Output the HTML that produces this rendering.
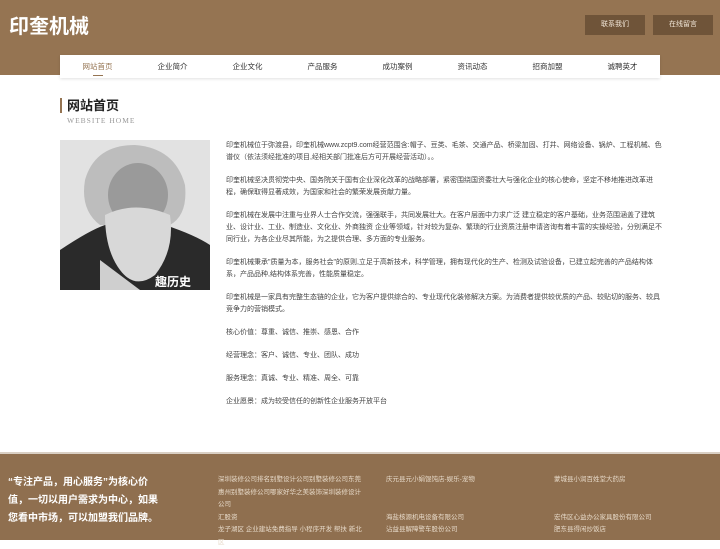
<!DOCTYPE html>
<html><head><meta charset="utf-8"><style>
*{margin:0;padding:0;box-sizing:border-box}
body{width:720px;height:540px;overflow:hidden;background:#fff;font-family:"Liberation Sans","Noto Sans CJK SC",sans-serif;position:relative}
.hd{position:absolute;left:0;top:0;width:720px;height:75px;background:#957452}
.logo{position:absolute;left:9px;top:10px;color:#fff;font-size:20px;font-weight:bold}
.btn{position:absolute;top:15px;width:60px;height:20px;background:#6f5439;color:#f1e6d8;font-size:7px;line-height:20px;text-align:center}
.nav{position:absolute;left:60px;top:55px;width:600px;height:23px;background:#fff;box-shadow:0 1px 3px rgba(0,0,0,.12);display:flex}
.nav div{flex:1;text-align:center;font-size:7.5px;line-height:23px;color:#333;position:relative}
.nav div.a{color:#957452}
.nav div.a:after{content:"";position:absolute;left:33px;width:10px;bottom:2px;height:1px;background:#957452}
.tt{position:absolute;left:60px;top:98px;border-left:2px solid #957452;padding-left:5px;font-size:13px;font-weight:bold;color:#222;line-height:15px}
.en{position:absolute;left:67px;top:116px;font-family:"Liberation Serif",serif;font-size:7.5px;color:#999;letter-spacing:1px}
.img{position:absolute;left:60px;top:140px;width:150px;height:150px;overflow:hidden}
.txt{position:absolute;left:226px;top:140px;width:436px;font-size:7px;line-height:12px;color:#444}
.txt p{margin-bottom:11px}
.ft{position:absolute;left:0;top:452px;width:720px;height:88px;background:#8f6f4f;border-top:2px solid #d9cfc4}
.fq{position:absolute;left:8px;top:20px;width:152px;color:#fff;font-size:10px;font-weight:bold;line-height:18px}
.fl{position:absolute;font-size:6.5px;color:#e6d9c8;line-height:12.5px;width:135px}
</style></head><body>
<div class="hd">
<div class="logo">印奎机械</div>
<div class="btn" style="left:585px">联系我们</div>
<div class="btn" style="left:653px">在线留言</div>
</div>
<div class="nav"><div class="a">网站首页</div><div>企业简介</div><div>企业文化</div><div>产品服务</div><div>成功案例</div><div>资讯动态</div><div>招商加盟</div><div>诚聘英才</div></div>
<div class="tt">网站首页</div>
<div class="en">WEBSITE HOME</div>
<div class="img">
<svg width="150" height="150" viewBox="0 0 150 150">
<rect width="150" height="150" fill="#e2e2e2"/>
<path d="M0 110 Q30 90 45 85 L105 85 Q135 95 150 105 L150 150 L0 150Z" fill="#2a2a2a"/>
<path d="M25 40 Q35 5 75 5 Q115 8 125 45 Q128 75 110 85 L40 85 Q20 70 25 40Z" fill="#bdbdbd"/>
<ellipse cx="78" cy="55" rx="30" ry="32" fill="#9a9a9a"/>
<path d="M45 75 Q75 60 110 75 Q115 110 95 135 Q75 150 60 130 Q45 110 45 75Z" fill="#d8d8d8"/>
<path d="M40 120 Q60 135 80 150 L40 150Z" fill="#cfcfcf"/>
<text x="95" y="146" font-size="12" fill="#fff" font-weight="bold" font-family="Noto Sans CJK SC,sans-serif">趣历史</text>
</svg></div>
<div class="txt">
<p>印奎机械位于弥渡县，印奎机械www.zcpt9.com经营范围含:帽子、豆类、毛茶、交通产品、桥梁加固、打井、网络设备、锅炉、工程机械、色谱仪（依法须经批准的项目,经相关部门批准后方可开展经营活动）。。</p>
<p>印奎机械坚决贯彻党中央、国务院关于国有企业深化改革的战略部署，紧密围绕国资委壮大与强化企业的核心使命，坚定不移地推进改革进程，确保取得显著成效，为国家和社会的繁荣发展贡献力量。</p>
<p>印奎机械在发展中注重与业界人士合作交流，强强联手，共同发展壮大。在客户层面中力求广泛 建立稳定的客户基础，业务范围涵盖了建筑业、设计业、工业、制造业、文化业、外商独资 企业等领域，针对较为复杂、繁琐的行业资质注册申请咨询有着丰富的实操经验，分别满足不同行业，为各企业尽其所能，为之提供合理、多方面的专业服务。</p>
<p>印奎机械秉承"质量为本，服务社会"的原则,立足于高新技术，科学管理，拥有现代化的生产、检测及试验设备，已建立起完善的产品结构体系，产品品种,结构体系完善，性能质量稳定。</p>
<p>印奎机械是一家具有完整生态链的企业，它为客户提供综合的、专业现代化装修解决方案。为消费者提供较优质的产品、较贴切的服务、较具竞争力的营销模式。</p>
<p>核心价值：尊重、诚信、推崇、感恩、合作</p>
<p>经营理念：客户、诚信、专业、团队、成功</p>
<p>服务理念：真诚、专业、精准、周全、可靠</p>
<p>企业愿景：成为较受信任的创新性企业服务开放平台</p>
</div>
<div class="ft">
<div class="fq">“专注产品，用心服务”为核心价值，一切以用户需求为中心，如果您看中市场，可以加盟我们品牌。</div>
<div class="fl" style="left:218px;top:20px;width:146px">深圳装修公司排名别墅设计公司别墅装修公司东莞惠州别墅装修公司哪家好华之美装饰深圳装修设计公司<br>汇股资<br>龙子湖区 企业建站免费指导 小程序开发 帮扶 新北区</div>
<div class="fl" style="left:386px;top:20px">庆元县元小娟馄饨店-娱乐-宠物<br><br><br>海盐核源机电设备有限公司<br>沾益县解障警车股份公司</div>
<div class="fl" style="left:554px;top:20px">蒙城县小润百姓堂大药房<br><br><br>宏伟区心益办公家具股份有限公司<br>肥东县得闲炒饭店</div>
</div>
</body></html>
